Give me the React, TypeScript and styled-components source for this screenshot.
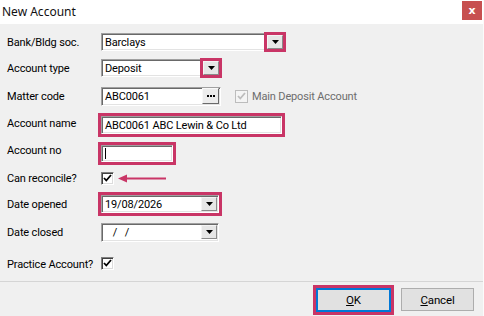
import React from "react";
import styled, { createGlobalStyle, css } from "styled-components";

const PINK = "#c93566";

const Global = createGlobalStyle`
  html, body { margin: 0; padding: 0; background: #f0f0f0; }
  body { font-family: Roboto, "Liberation Sans", Arial, sans-serif; font-size: 11px; letter-spacing: -0.15px; color: #000; }
  * { box-sizing: border-box; }
`;

const Window = styled.div`
  width: 484px;
  height: 316px;
  background: #f0f0f0;
  display: flex;
  flex-direction: column;
  border-right: 1px solid #fbfbfb;
  overflow: hidden;
`;

const TitleBar = styled.div`
  height: 24px;
  background: #fff;
  display: flex;
  align-items: flex-start;
  justify-content: space-between;
  flex-shrink: 0;
`;

const Title = styled.div`
  font-family: "Noto Sans", "Liberation Sans", sans-serif;
  font-size: 12px;
  letter-spacing: 0;
  color: #111;
  padding: 4px 0 0 2px;
  line-height: 15px;
`;

const CloseBtn = styled.div`
  width: 20px;
  height: 19px;
  margin: 1px 1px 0 0;
  background: #c75050;
  color: #fff;
  font-weight: bold;
  font-size: 11px;
  display: flex;
  align-items: center;
  justify-content: center;
  font-family: "DejaVu Sans", sans-serif;
`;

const Form = styled.div`
  display: flex;
  flex-direction: column;
  padding: 5px 0 0 7px;
  flex: 1;
`;

const Row = styled.div<{ $h: number }>`
  height: ${(p) => p.$h}px;
  display: flex;
  align-items: center;
`;

const Label = styled.div<{ $dy?: number }>`
  width: 94px;
  flex-shrink: 0;
  color: #000;
  white-space: nowrap;
  position: relative;
  top: ${(p) => p.$dy ?? 0}px;
`;

const highlight = css`
  outline: 3px solid ${PINK};
  outline-offset: 0;
`;

const Sunken = styled.div<{ $w: number; $h?: number; $hl?: boolean }>`
  width: ${(p) => p.$w}px;
  height: ${(p) => p.$h ?? 18}px;
  background: #fff;
  border: 1px solid;
  border-color: #a0a0a0 #fff #fff #a0a0a0;
  box-shadow: inset 1px 1px 0 #696969, inset -1px -1px 0 #e3e3e3;
  display: flex;
  align-items: center;
  padding-left: 3px;
  ${(p) => p.$hl && highlight}
`;

const FieldText = styled.span`
  flex: 1;
  white-space: pre;
  line-height: 13px;
  color: #000;
`;

const DropBtn = styled.div<{ $hl?: boolean }>`
  width: 16px;
  height: 14px;
  margin-right: 1px;
  background: #e6e6e6;
  border: 1px solid;
  border-color: #f4f4f4 #8a8a8a #8a8a8a #f4f4f4;
  display: flex;
  align-items: center;
  justify-content: center;
  ${(p) => p.$hl && highlight}
`;

const EllipsisBtn = styled.div`
  width: 17px;
  height: 16px;
  margin-right: 1px;
  background: #ececec;
  border: 1px solid;
  border-color: #f8f8f8 #6a6a6a #6a6a6a #f8f8f8;
  display: flex;
  align-items: center;
  justify-content: center;
  gap: 1px;
`;

const Dot = styled.span`
  width: 2px;
  height: 2px;
  background: #000;
`;

const Caret = styled.span`
  width: 1px;
  height: 11px;
  background: #000;
`;

const Check = styled.div<{ $disabled?: boolean }>`
  width: 13px;
  height: 13px;
  flex-shrink: 0;
  display: flex;
  align-items: center;
  justify-content: center;
  ${(p) =>
    p.$disabled
      ? css`
          border: 1px solid #bcbcbc;
          background: #f4f4f4;
        `
      : css`
          border: 1px solid;
          border-color: #808080 #fff #fff #808080;
          box-shadow: inset 1px 1px 0 #404040, inset -1px -1px 0 #dcdcdc;
          background: #fff;
        `}
`;

const CheckGroup = styled.div`
  display: flex;
  align-items: center;
`;

const CheckLabel = styled.span<{ $disabled?: boolean }>`
  margin-left: 4px;
  color: ${(p) => (p.$disabled ? "#6d6d6d" : "#000")};
`;

const MatterGroup = styled.div`
  display: flex;
  align-items: center;
  gap: 14px;
`;

const ArrowSvg = styled.svg`
  margin-left: 4px;
`;

const Separator = styled.div`
  height: 1px;
  background: #d5d5d5;
  flex-shrink: 0;
`;

const Footer = styled.div`
  height: 35px;
  flex-shrink: 0;
  display: flex;
  align-items: center;
  justify-content: flex-end;
  gap: 10px;
  padding-right: 9px;
`;

const Button = styled.div<{ $default?: boolean; $hl?: boolean }>`
  height: ${(p) => (p.$default ? 24 : 23)}px;
  width: ${(p) => (p.$default ? 75 : 73)}px;
  background: #e1e1e1;
  border: ${(p) => (p.$default ? "2px solid #0078d7" : "1px solid #adadad")};
  display: flex;
  align-items: center;
  justify-content: center;
  color: #000;
  font-size: 11.5px;
  ${(p) => p.$hl && highlight}
`;

const U = styled.span`
  text-decoration: underline;
  text-underline-offset: 1px;
`;

const Tri = () => (
  <svg width="7" height="4" viewBox="0 0 7 4">
    <path d="M0 0H7L3.5 4Z" fill="#000" />
  </svg>
);

const Tick = ({ color = "#000" }: { color?: string }) => (
  <svg width="9" height="8" viewBox="0 0 9 8">
    <path d="M1 4L3.3 6.5L8 1" fill="none" stroke={color} strokeWidth="1.8" />
  </svg>
);

export default function App() {
  return (
    <>
      <Global />
      <Window>
        <TitleBar>
          <Title>New Account</Title>
          <CloseBtn>x</CloseBtn>
        </TitleBar>
        <Form>
          <Row $h={26}>
            <Label>Bank/Bldg soc.</Label>
            <Sunken $w={184}>
              <FieldText>Barclays</FieldText>
              <DropBtn $hl>
                <Tri />
              </DropBtn>
            </Sunken>
          </Row>
          <Row $h={26}>
            <Label>Account type</Label>
            <Sunken $w={120}>
              <FieldText>Deposit</FieldText>
              <DropBtn $hl>
                <Tri />
              </DropBtn>
            </Sunken>
          </Row>
          <Row $h={30}>
            <Label>Matter code</Label>
            <MatterGroup>
              <Sunken $w={120} $h={19}>
                <FieldText>ABC0061</FieldText>
                <EllipsisBtn>
                  <Dot />
                  <Dot />
                  <Dot />
                </EllipsisBtn>
              </Sunken>
              <CheckGroup>
                <Check $disabled>
                  <Tick color="#bcbcbc" />
                </Check>
                <CheckLabel $disabled>Main Deposit Account</CheckLabel>
              </CheckGroup>
            </MatterGroup>
          </Row>
          <Row $h={28}>
            <Label $dy={-2}>Account name</Label>
            <Sunken $w={181} $hl>
              <FieldText>ABC0061 ABC Lewin &amp; Co Ltd</FieldText>
            </Sunken>
          </Row>
          <Row $h={28}>
            <Label $dy={-3}>Account no</Label>
            <Sunken $w={72} $h={17} $hl>
              <Caret />
            </Sunken>
          </Row>
          <Row $h={22}>
            <Label>Can reconcile?</Label>
            <Check>
              <Tick />
            </Check>
            <ArrowSvg width="48" height="9" viewBox="0 0 48 9">
              <path d="M0 4.5L9 0.5V8.5Z" fill={PINK} />
              <rect x="8" y="3.5" width="40" height="2" fill={PINK} />
            </ArrowSvg>
          </Row>
          <Row $h={30}>
            <Label>Date opened</Label>
            <Sunken $w={118} $hl>
              <FieldText>19/08/2026</FieldText>
              <DropBtn>
                <Tri />
              </DropBtn>
            </Sunken>
          </Row>
          <Row $h={26}>
            <Label>Date closed</Label>
            <Sunken $w={118} $h={19}>
              <FieldText>{"   /   /"}</FieldText>
              <DropBtn>
                <Tri />
              </DropBtn>
            </Sunken>
          </Row>
          <Row $h={36}>
            <Label $dy={1}>Practice Account?</Label>
            <Check>
              <Tick />
            </Check>
          </Row>
        </Form>
        <Separator />
        <Footer>
          <Button $default $hl>
            <span>
              <U>O</U>K
            </span>
          </Button>
          <Button>
            <span>
              <U>C</U>ancel
            </span>
          </Button>
        </Footer>
      </Window>
    </>
  );
}
